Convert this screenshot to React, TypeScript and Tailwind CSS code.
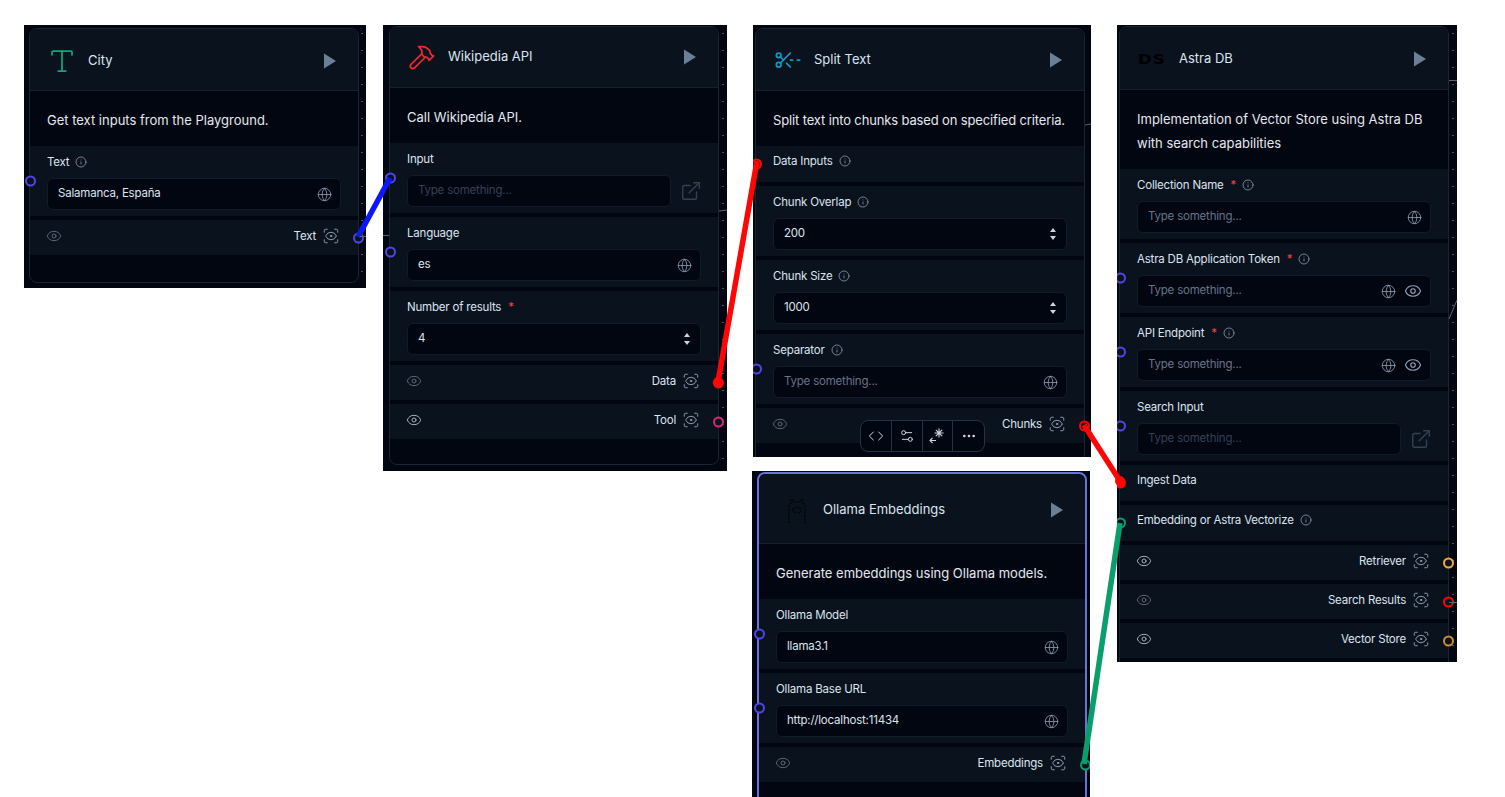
import React from 'react'
import { Code, ExternalLink, Ellipsis, Eye, Globe, Hammer, Info, ScanEye, ScissorsLineDashed, Settings2, Type } from 'lucide-react'

function Handle({ side, color, filled }: { side: 'left' | 'right'; color: string; filled?: boolean }) {
  return (
    <span
      className={`absolute top-1/2 z-10 block h-[11px] w-[11px] -translate-y-1/2 rounded-full border-2 ${side === 'left' ? 'left-[-5px]' : 'right-[-6px]'}`}
      style={{ borderColor: color, backgroundColor: filled ? color : '#0a121e' }}
    />
  )
}

function Label({ text, required, info }: { text: string; required?: boolean; info?: boolean }) {
  return (
    <div className="flex h-4 items-center text-[11.5px] leading-4 tracking-[-0.2px] text-[#dbe4ef]">
      <span>{text}</span>
      {required && <span className="ml-[7px] text-[#ef4444]">*</span>}
      {info && <Info size={12} strokeWidth={1.5} className="ml-[6px] text-[#94a3b8]" />}
    </div>
  )
}

type FieldProps = {
  label: string
  value?: string
  required?: boolean
  info?: boolean
  kind?: 'text' | 'number' | 'link' | 'secret'
  handle?: string
}

function Field({ label, value, required, info, kind = 'text', handle }: FieldProps) {
  const link = kind === 'link'
  return (
    <section className="relative bg-[#0a121e] px-[17px] pb-[6px] pt-[8px]">
      {handle && <Handle side="left" color={handle} />}
      <Label text={label} required={required} info={info} />
      <div className="mt-2 flex items-center gap-[9px]">
        <div className="flex h-8 flex-1 items-center rounded-md border border-[#121b29] bg-[#020610] pl-[10px] pr-[8px] text-[11.5px] tracking-[-0.2px]">
          <span className={value ? 'text-[#dbe4ef]' : link ? 'text-[#334155]' : 'text-[#64748b]'}>{value || 'Type something...'}</span>
          <span className="ml-auto flex items-center gap-[8px] text-[#94a3b8]">
            {(kind === 'text' || kind === 'secret') && <Globe size={15} strokeWidth={1.25} />}
            {kind === 'secret' && <Eye size={18} strokeWidth={1.5} />}
            {kind === 'number' && (
              <span className="mr-[2px] flex flex-col gap-[4px]">
                <span className="h-0 w-0 border-x-[3.5px] border-b-[4px] border-x-transparent border-b-[#cbd5e1]" />
                <span className="h-0 w-0 border-x-[3.5px] border-t-[4px] border-x-transparent border-t-[#cbd5e1]" />
              </span>
            )}
          </span>
        </div>
        {link && <ExternalLink size={22} strokeWidth={1.5} className="mr-[-1px] text-[#334155]" />}
      </div>
    </section>
  )
}

function Connector({ label, required, info, handle, filled }: { label: string; required?: boolean; info?: boolean; handle: string; filled?: boolean }) {
  return (
    <section className="relative h-[36px] bg-[#0a121e] px-[17px] pt-[7px]">
      <Handle side="left" color={handle} filled={filled} />
      <Label text={label} required={required} info={info} />
    </section>
  )
}

function Output({ label, handle, filled, dim }: { label: string; handle: string; filled?: boolean; dim?: boolean }) {
  return (
    <section className="relative flex h-[35px] items-start bg-[#0a121e] pl-[16px] pr-[18px] pt-[8px] text-[11.5px] leading-4 tracking-[-0.2px] text-[#dbe4ef]">
      <Handle side="right" color={handle} filled={filled} />
      <Eye size={16} strokeWidth={1.5} className={dim ? 'text-[#5b6675]' : 'text-[#a3adba]'} />
      <span className="ml-auto">{label}</span>
      <ScanEye size={18} strokeWidth={1.25} className="ml-[6px] -mt-px text-[#94a3b8]" />
    </section>
  )
}

function Play() {
  return (
    <svg width="12" height="16" viewBox="0 0 12 16" className="ml-auto mr-[22px] shrink-0">
      <path d="M0 0.5 12 8 0 15.5Z" fill="#6b7f96" />
    </svg>
  )
}

function OllamaLogo() {
  return (
    <svg width="20" height="26" viewBox="0 0 20 26" fill="none" stroke="#000" strokeWidth="1.1" strokeDasharray="2 1.2" className="mt-[2px]">
      <path d="M2 25V9c0-2 1-3 2-4V1l2 1v2h8V2l2-1v4c1 1 2 2 2 4v16" />
      <path d="M6 11c2-2 6-2 8 0 1 2-1 4-4 4s-5-2-4-4Z" />
    </svg>
  )
}

function Card({ icon, title, desc, headH, iconW, selected, children }: { icon: React.ReactNode; title: string; desc: React.ReactNode; headH: string; iconW: string; selected?: boolean; children: React.ReactNode }) {
  return (
    <div className={`flex h-full flex-col rounded-lg bg-[#020610] ${selected ? 'border-2 border-[#6a72dc]' : 'border border-[#1a2433]'}`}>
      <header className={`flex shrink-0 items-center rounded-t-lg border-b border-[#16202e] bg-[#0a121e] ${headH}`}>
        <div className={`flex shrink-0 items-center justify-center ${iconW}`}>{icon}</div>
        <span className="text-[13px] text-[#dbe4ef]">{title}</span>
        <Play />
      </header>
      <p className="pb-[14px] pl-[17px] pt-[17px] text-[13px] leading-6 text-[#e2e8f0]">{desc}</p>
      <div className="flex flex-col gap-1">{children}</div>
    </div>
  )
}

function Dots() {
  return <div className="absolute inset-y-0 right-0 w-[8px] bg-[radial-gradient(circle,#4a5563_0.7px,transparent_1px)] bg-[size:8px_17px]" />
}

function Toolbar() {
  const cell = 'flex h-full w-[31px] items-center justify-center border-r border-[#22344a] text-[#cbd5e1]'
  return (
    <div className="absolute left-[105px] top-[392px] z-20 flex h-8 w-[125px] overflow-hidden rounded-lg border border-[#22344a] bg-[#020610]">
      <div className={cell}><Code size={16} strokeWidth={1.5} /></div>
      <div className={cell}><Settings2 size={16} strokeWidth={1.5} /></div>
      <div className={cell}>
        <svg width="18" height="18" viewBox="0 0 18 18" fill="none" stroke="currentColor" strokeWidth="1.1">
          <path d="M11 1.500v9M6.500 6h9M7.800 2.800l6.400 6.400M14.200 2.800l-6.400 6.400" />
          <path d="M8 13.500H2M4.500 11 2 13.500 4.500 16" />
        </svg>
      </div>
      <div className={`${cell} border-r-0`}><Ellipsis size={16} strokeWidth={2} /></div>
    </div>
  )
}

function Edges() {
  return (
    <svg className="pointer-events-none absolute inset-0 z-30" width="1505" height="797" fill="none" strokeWidth="5.5" strokeLinecap="butt">
      <path d="M358 237 390 178" stroke="#0b16fb" />
      <path d="M718 382 757 161" stroke="#ff0606" />
      <path d="M1084 425 1120 481" stroke="#ff0606" />
      <path d="M1084 764 1120 523" stroke="#0a9e6a" />
      <circle cx="718" cy="382" r="5" fill="#ff0606" stroke="none" />
      <circle cx="1120" cy="481" r="5" fill="#ff0606" stroke="none" />
      <g stroke="#5b6470" strokeWidth="1">
        <path d="M360 236.500h6M383 235.500h6M719 211 727 210M1085 125 1091 124M1449 80.500h8M1449 319 1457 300M1449 602.500h8" />
      </g>
    </svg>
  )
}

export default function App() {
  return (
    <div className="relative h-[797px] w-[1505px] overflow-hidden bg-white font-[Inter,sans-serif]">
      {/* City */}
      <div className="absolute left-[24px] top-[25px] h-[263px] w-[342px] overflow-hidden bg-[#020610] pl-[5px] pt-[3px]">
        <Dots />
        <div className="relative h-[255px] w-[330px]">
          <Card icon={<Type size={30} strokeWidth={1.4} className="text-[#10a573]" />} title="City" headH="h-[62px] pt-[2px]" iconW="w-[58px] pl-[5px]" desc="Get text inputs from the Playground.">
            <Field label="Text" value="Salamanca, España" info handle="#4f46e5" />
            <Output label="Text" handle="#4f46e5" dim />
          </Card>
        </div>
      </div>

      {/* Wikipedia */}
      <div className="absolute left-[383px] top-[25px] h-[446px] w-[344px] overflow-hidden bg-[#020610] pl-[6px] pt-px">
        <Dots />
        <div className="relative h-[439px] w-[330px]">
          <Card icon={<Hammer size={28} strokeWidth={1.5} className="text-[#ef2b2b]" />} title="Wikipedia API" headH="h-[61px]" iconW="w-[58px] pl-[5px]" desc="Call Wikipedia API.">
            <Field label="Input" kind="link" handle="#4f46e5" />
            <Field label="Language" value="es" handle="#4f46e5" />
            <Field label="Number of results" value="4" kind="number" required />
            <Output label="Data" handle="#ff0606" filled dim />
            <Output label="Tool" handle="#db2777" />
          </Card>
        </div>
      </div>

      {/* Split Text */}
      <div className="absolute left-[753px] top-[25px] h-[432px] w-[338px] overflow-hidden bg-[#020610] pl-[2px] pt-[3px]">
        <div className="relative h-[460px] w-[330px]">
          <Card
            icon={<ScissorsLineDashed size={28} strokeWidth={1.5} className="text-[#0b9ac4]" />}
            title="Split Text"
            headH="h-[62px]"
            iconW="w-[58px] pl-[5px]"
            desc={<span className="tracking-[-0.14px]">Split text into chunks based on specified criteria.</span>}
          >
            <Connector label="Data Inputs" info handle="#ff0606" />
            <Field label="Chunk Overlap" value="200" kind="number" info />
            <Field label="Chunk Size" value="1000" kind="number" info />
            <Field label="Separator" info handle="#4f46e5" />
            <Output label="Chunks" handle="#ff0606" dim />
          </Card>
          <Toolbar />
        </div>
      </div>

      {/* Ollama Embeddings */}
      <div className="absolute left-[752px] top-[471px] h-[326px] w-[338px] overflow-hidden bg-[#020610] pl-[5px] pt-px">
        <div className="relative h-[360px] w-[330px]">
          <Card selected icon={<OllamaLogo />} title="Ollama Embeddings" headH="h-[70px] pt-[2px]" iconW="w-[64px] pl-[12px]" desc="Generate embeddings using Ollama models.">
            <Field label="Ollama Model" value="llama3.1" handle="#4f46e5" />
            <Field label="Ollama Base URL" value="http://localhost:11434" handle="#4f46e5" />
            <Output label="Embeddings" handle="#0a9e6a" dim />
          </Card>
        </div>
      </div>

      {/* Astra DB */}
      <div className="absolute left-[1117px] top-[25px] h-[637px] w-[340px] overflow-hidden bg-[#020610] pl-[2px] pt-px">
        <Dots />
        <div className="relative h-[660px] w-[330px]">
          <Card
            icon={<span className="scale-x-[1.2] font-['DejaVu_Sans',sans-serif] text-[14px] font-bold tracking-[1px] text-black">DS</span>}
            title="Astra DB"
            headH="h-[63px] pt-[2px]"
            iconW="w-[59px] pl-[5px]"
            desc={<>Implementation of Vector Store using Astra DB<br />with search capabilities</>}
          >
            <Field label="Collection Name" required info />
            <Field label="Astra DB Application Token" required info kind="secret" handle="#4f46e5" />
            <Field label="API Endpoint" required info kind="secret" handle="#4f46e5" />
            <Field label="Search Input" kind="link" handle="#4f46e5" />
            <Connector label="Ingest Data" handle="#ff0606" filled />
            <Connector label="Embedding or Astra Vectorize" info handle="#0a9e6a" />
            <Output label="Retriever" handle="#f5a83c" />
            <Output label="Search Results" handle="#ff0606" dim />
            <Output label="Vector Store" handle="#c98d35" />
          </Card>
        </div>
      </div>

      <Edges />
    </div>
  )
}
